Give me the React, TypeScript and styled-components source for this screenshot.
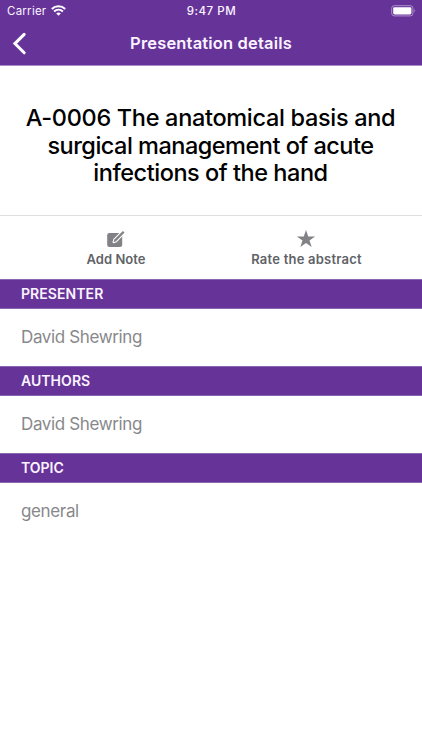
import React from 'react';
import styled, { createGlobalStyle } from 'styled-components';

const GlobalStyle = createGlobalStyle`
  * { box-sizing: border-box; }
  body {
    margin: 0;
    background: #fff;
    font-family: Inter, "Liberation Sans", sans-serif;
  }
`;

const Screen = styled.main`
  display: flex;
  flex-direction: column;
  width: 100%;
  min-height: 750px;
  background: #fff;
`;

const Header = styled.header`
  height: 66px;
  background: #663399;
  border-bottom: 1px solid #a98bc8;
  color: #fbf3ff;
`;

const StatusBar = styled.div`
  display: grid;
  grid-template-columns: 1fr auto 1fr;
  align-items: center;
  height: 22px;
  padding: 0 6px 0 7px;
  font-size: 11.5px;
  line-height: 22px;
`;

const Carrier = styled.div`
  display: flex;
  align-items: center;
  gap: 5px;
  letter-spacing: 0.25px;

  svg { margin-bottom: 2px; }
`;

const Clock = styled.time`
  font-weight: 500;
  letter-spacing: 0.5px;
`;

const BatteryIcon = styled.svg`
  justify-self: end;
  margin-bottom: 1px;
`;

const NavBar = styled.nav`
  display: grid;
  grid-template-columns: 40px 1fr 40px;
  align-items: center;
  height: 43px;
`;

const BackButton = styled.button`
  display: flex;
  align-items: center;
  height: 43px;
  padding: 0 0 0 12px;
  border: 0;
  background: none;
`;

const NavTitle = styled.h1`
  margin: 0;
  font-size: 16.5px;
  font-weight: 600;
  letter-spacing: 0.17px;
  line-height: 43px;
  text-align: center;
`;

const Hero = styled.section`
  height: 150px;
  padding-top: 38px;
  border-bottom: 1px solid #dedede;
`;

const AbstractTitle = styled.h2`
  margin: 0;
  color: #000;
  font-size: 23.5px;
  font-weight: 500;
  line-height: 27.5px;
  text-align: center;
`;

const TitleLine = styled.span<{ $spacing: number }>`
  display: block;
  margin-left: -1px;
  letter-spacing: ${({ $spacing }) => $spacing}px;
  white-space: nowrap;
`;

const Actions = styled.div`
  display: grid;
  grid-template-columns: 191px 190px;
  justify-content: center;
  height: 63px;
`;

const Action = styled.button`
  display: flex;
  flex-direction: column;
  align-items: center;
  padding: 13px 0 0;
  border: 0;
  background: none;
  color: #5f6368;
  font-family: inherit;
  font-size: 13px;
  font-weight: 600;
  line-height: 20px;

  svg { margin-right: 1px; }
`;

const SectionBar = styled.h3`
  height: 30px;
  margin: 0;
  padding-left: 21px;
  border: solid #8b65b1;
  border-width: 1px 0;
  background: #663399;
  color: #fbf3ff;
  font-size: 14px;
  font-weight: 600;
  line-height: 28px;
`;

const Label = styled.span<{ $spacing: number }>`
  letter-spacing: ${({ $spacing }) => $spacing}px;
`;

const Value = styled.p`
  height: 57px;
  margin: 0;
  padding-left: 21px;
  color: #88888b;
  font-size: 17px;
  letter-spacing: -0.36px;
  line-height: 57.5px;
`;

const titleLines = [
  { text: 'A-0006 The anatomical basis and', spacing: -0.32 },
  { text: 'surgical management of acute', spacing: -0.51 },
  { text: 'infections of the hand', spacing: -0.47 },
];

const sections = [
  { label: 'PRESENTER', value: 'David Shewring', spacing: 0.07 },
  { label: 'AUTHORS', value: 'David Shewring', spacing: 0.05 },
  { label: 'TOPIC', value: 'general', spacing: 0 },
];

function Wifi() {
  return (
    <svg width="15" height="11" viewBox="0 0 15 11" fill="none" stroke="#fff" strokeWidth="2">
      <path d="M.8 3.9C4.5.4 10.5.4 14.2 3.9" />
      <path d="M3.1 6.5c2.5-2.2 6.3-2.2 8.8 0" />
      <path d="M7.5 10.7 5.2 8.4c1.3-1.1 3.3-1.1 4.6 0z" fill="#fff" stroke="none" />
    </svg>
  );
}

function Battery() {
  return (
    <BatteryIcon width="25" height="12" viewBox="0 0 25 12">
      <rect x=".7" y=".7" width="21.2" height="10.2" rx="2.6" fill="none" stroke="#af91cd" />
      <rect x="2.2" y="2.2" width="18.2" height="7.2" rx="1.3" fill="#fff" />
      <path d="M23.3 4c1.2.6 1.2 3 0 3.6z" fill="#af91cd" />
    </BatteryIcon>
  );
}

function NoteIcon() {
  return (
    <svg width="20" height="20" viewBox="0 0 20 20">
      <rect x="1.2" y="4" width="15" height="14" rx="2.2" fill="#828286" />
      <path d="m7.6 13.2.8-2.6 8.5-8.6 1.6 1.6-8.4 8.7z" fill="#828286" stroke="#fff" strokeWidth="2.2" strokeLinejoin="round" />
      <path d="m7.6 13.2.8-2.6 8.5-8.6 1.6 1.6-8.4 8.7z" fill="#828286" />
    </svg>
  );
}

function StarIcon() {
  return (
    <svg width="20" height="20" viewBox="0 0 20 20">
      <path d="m10 .9 2.2 6.5h6.9l-5.6 4.1 2.2 6.5-5.7-3.9-5.7 3.9 2.2-6.5-5.6-4.1h6.9z" fill="#828286" />
    </svg>
  );
}

export default function App() {
  return (
    <>
      <GlobalStyle />
      <Screen>
        <Header>
          <StatusBar>
            <Carrier>Carrier <Wifi /></Carrier>
            <Clock>9:47 PM</Clock>
            <Battery />
          </StatusBar>
          <NavBar>
            <BackButton aria-label="Back">
              <svg width="16" height="24" viewBox="0 0 16 24">
                <path d="M12.2 2.4 2.9 11.6l9.3 9.2" fill="none" stroke="#fff" strokeWidth="3" strokeLinecap="round" />
              </svg>
            </BackButton>
            <NavTitle>Presentation details</NavTitle>
          </NavBar>
        </Header>
        <Hero>
          <AbstractTitle>
            {titleLines.map((line) => (
              <TitleLine key={line.text} $spacing={line.spacing}>{line.text}</TitleLine>
            ))}
          </AbstractTitle>
        </Hero>
        <Actions>
          <Action><NoteIcon /><Label $spacing={0.05}>Add Note</Label></Action>
          <Action><StarIcon /><Label $spacing={0.22}>Rate the abstract</Label></Action>
        </Actions>
        {sections.map((section) => (
          <section key={section.label}>
            <SectionBar><Label $spacing={section.spacing}>{section.label}</Label></SectionBar>
            <Value>{section.value}</Value>
          </section>
        ))}
      </Screen>
    </>
  );
}
